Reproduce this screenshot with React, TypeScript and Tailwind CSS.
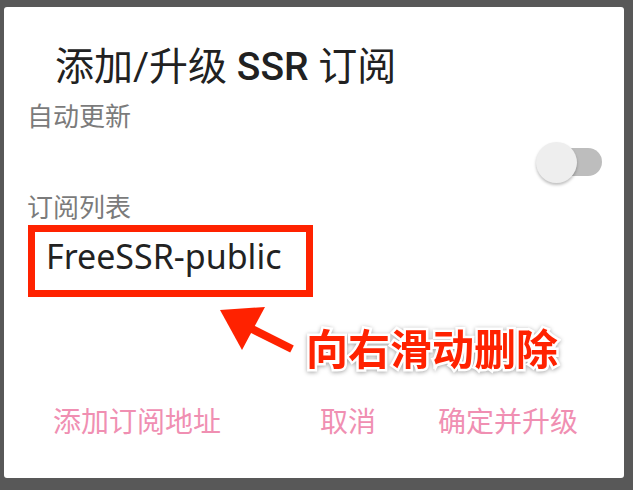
export default function App() {
  return (
    <div className="w-[633px] h-[490px] bg-[#585858] pt-[7px] pl-[4px]">
      <div
        className="relative w-[620px] h-[471px] bg-white rounded-[3px] flex flex-col"
        style={{ fontFamily: '"Noto Sans", "Noto Sans CJK SC", sans-serif' }}
      >
        <h1
          className="mt-[41px] ml-[51px] text-[39px] leading-[38px] font-normal text-[#212121]"
          style={{ fontFamily: 'Roboto, "Noto Sans CJK SC", sans-serif' }}
        >
          添加/升级 <span className="font-medium">SSR</span> 订阅
        </h1>

        <p className="mt-[17px] ml-[23px] text-[26px] leading-[26px] text-[#7b7b7b]">自动更新</p>

        <div className="mt-[12px] flex justify-end pr-[22px]">
          <div className="relative w-[66px] h-[42px] flex items-center">
            <div className="ml-[4px] w-[62px] h-[28px] rounded-full bg-[#bdbdbd]" />
            <div className="absolute left-0 top-[1px] w-[41px] h-[41px] rounded-full bg-[#eeeeee] shadow-[0_2px_3px_rgba(0,0,0,0.25)]" />
          </div>
        </div>

        <p className="mt-[11px] ml-[23px] text-[26px] leading-[26px] text-[#7b7b7b]">订阅列表</p>

        <div className="mt-[5px] ml-[24px] w-[285px] h-[72px] border-[7px] border-[#ff2200] pl-[11px] pt-[7px]">
          <span className="text-[34px] leading-[34px] text-[#222222]">FreeSSR-public</span>
        </div>

        <div className="mt-[110px] flex justify-between pl-[49px] pr-[46px] text-[28px] leading-[28px] text-[#f08fb2]">
          <button>添加订阅地址</button>
          <div className="flex gap-[62px]">
            <button>取消</button>
            <button>确定并升级</button>
          </div>
        </div>

        {/* annotation */}
        <svg className="absolute left-[200px] top-[290px]" width="110" height="70" viewBox="0 0 110 70">
          <line x1="46" y1="31" x2="88" y2="52" stroke="#ff2200" strokeWidth="8" />
          <polygon points="16,13 61,10 38,53" fill="#ff2200" />
        </svg>
        <span className="absolute left-[302px] top-[321px] text-[42px] leading-[42px] font-bold text-[#ff2200] [-webkit-text-stroke:5px_white] [paint-order:stroke_fill] drop-shadow-[0_1px_2px_rgba(0,0,0,0.35)]">
          向右滑动删除
        </span>
      </div>
    </div>
  );
}
